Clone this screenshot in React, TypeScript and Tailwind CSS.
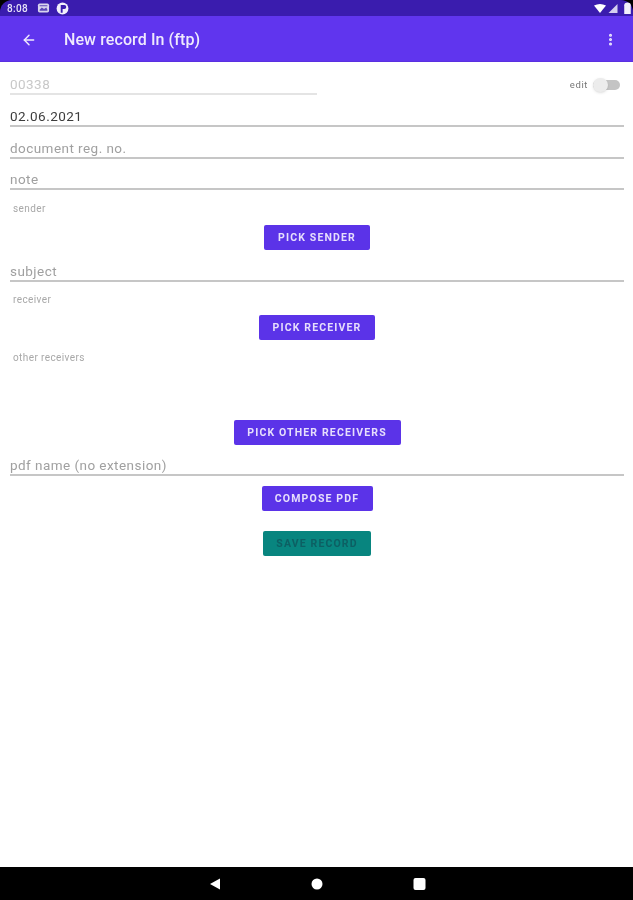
import React from 'react';
import { ArrowLeft, MoreVertical } from 'lucide-react';

const font = "font-['Roboto','Liberation_Sans',sans-serif]";

const Field: React.FC<{ text: string; dark?: boolean; faint?: boolean; className?: string }> = ({ text, dark, faint, className }) => (
  <div className={`flex items-end border-b-2 ${faint ? 'border-[#e4e4e4]' : 'border-[#c6c6c6]'} ${className ?? 'h-[32px]'}`}>
    <span className={`text-[13.5px] leading-[18px] tracking-[0.45px] blur-[0.35px] ${dark ? 'text-[#3c3c3c]' : faint ? 'text-[#c8c8c8]' : 'text-[#a0a0a0]'}`}>{text}</span>
  </div>
);

const Label: React.FC<{ text: string }> = ({ text }) => (
  <div className="h-[12px] pl-[3px] text-[10px] leading-[12px] tracking-[0.4px] text-[#a8a8a8] blur-[0.35px]">{text}</div>
);

const Btn: React.FC<{ text: string; className: string; teal?: boolean }> = ({ text, className, teal }) => (
  <div className="flex justify-center">
    <button
      className={`h-[25px] rounded-[2px] text-[10.5px] font-bold tracking-[1.15px] whitespace-nowrap blur-[0.35px] ${teal ? 'bg-[#08857f] text-[#0d5f63]' : 'bg-[#5b33e8] text-[#e6defc]'} ${className}`}
    >
      {text}
    </button>
  </div>
);

export default function App() {
  return (
    <div className={`h-[900px] flex flex-col bg-black overflow-hidden ${font}`}>
      <div className="h-[16px] shrink-0 rounded-tl-[12px] rounded-tr-[12px] bg-[#3a1cae] flex items-center justify-between pl-[7px] pr-[1px]">
        <div className="flex items-center">
          <span className="w-[30px] text-[10px] font-medium tracking-[0.3px] text-[#e8e4f8] blur-[0.3px]">8:08</span>
          <svg width="13" height="10" viewBox="0 0 11 9">
            <rect x="0.5" y="0.5" width="10" height="8" rx="1.5" fill="#d8d4ee" />
            <path d="M2 2h7v1H2zM2 6l2-2 2 1.500L8 4l1 2v1H2z" fill="#5b45b8" />
          </svg>
          <svg className="ml-[6px]" width="13" height="13" viewBox="0 0 11 11">
            <circle cx="5.500" cy="5.500" r="5" fill="#f2f0fb" />
            <path d="M4 2.500h3a1.600 1.600 0 0 1 0 3.400H5.600V9H4z" fill="#3a1cae" />
          </svg>
        </div>
        <div className="flex items-center gap-[2px]">
          <svg width="12" height="9" viewBox="0 0 12 9"><path d="M0 1.500Q6-1.500 12 1.500L6 9z" fill="#fff" /></svg>
          <svg width="10" height="9" viewBox="0 0 9 9"><path d="M9 0v9H0z" fill="#d4cff0" /></svg>
          <svg className="ml-[3px]" width="9" height="12" viewBox="0 0 8 11"><path d="M1 3q0-2.500 3-2.500T7 3v8H1z" fill="#f2f0fb" /></svg>
        </div>
      </div>

      <header className="h-[46px] shrink-0 bg-[#6035ee] flex items-center pt-[2px] pl-[21px] pr-[15px] border-b border-[#5a30e0]">
        <ArrowLeft size={16} strokeWidth={2.2} className="text-[#efeafd]" />
        <h1 className="ml-[27px] text-[16px] font-medium tracking-[0.1px] text-[#efeafd] blur-[0.3px]">New record In (ftp)</h1>
        <MoreVertical size={15} strokeWidth={2.8} className="ml-auto text-[#efeafd]" />
      </header>

      <main className="flex-1 bg-white pl-[10px] pr-[9px] pt-[1px]">
        <div className="flex items-end justify-between">
          <Field text="00338" faint className="h-[32px] w-[307px]" />
          <div className="flex items-center gap-[5px] pr-[4px] pb-[3px]">
            <span className="text-[9.5px] tracking-[0.6px] text-[#777] blur-[0.35px]">edit</span>
            <div className="relative w-[27px] h-[10px] rounded-full bg-[#c4c4c4]">
              <div className="absolute left-0 top-[-2px] w-[15px] h-[14px] rounded-full bg-[#ececec] shadow-sm" />
            </div>
          </div>
        </div>
        <Field text="02.06.2021" dark />
        <Field text="document reg. no." />
        <Field text="note" className="h-[31px]" />

        <div className="pt-[13px]"><Label text="sender" /></div>
        <div className="pt-[10px]"><Btn text="PICK SENDER" className="w-[106px]" /></div>
        <Field text="subject" />

        <div className="pt-[12px]"><Label text="receiver" /></div>
        <div className="pt-[9px]"><Btn text="PICK RECEIVER" className="w-[116px]" /></div>
        <div className="pt-[12px]"><Label text="other receivers" /></div>

        <div className="pt-[56px]"><Btn text="PICK OTHER RECEIVERS" className="w-[167px]" /></div>
        <Field text="pdf name (no extension)" className="h-[31px]" />

        <div className="pt-[10px]"><Btn text="COMPOSE PDF" className="w-[111px]" /></div>
        <div className="pt-[20px]"><Btn text="SAVE RECORD" teal className="w-[108px]" /></div>
      </main>

      <nav className="h-[33px] shrink-0 bg-black flex items-center">
        <div className="w-full flex items-center justify-center gap-[90px] pl-[1px]">
          <svg width="12" height="12" viewBox="0 0 12 12"><path d="M11 0.500v11L1 6z" fill="#fff" /></svg>
          <svg width="12" height="12" viewBox="0 0 12 12"><circle cx="6" cy="6" r="5.500" fill="#fff" /></svg>
          <svg width="13" height="12" viewBox="0 0 13 12"><rect x="0.500" width="12" height="12" rx="2" fill="#fff" /></svg>
        </div>
      </nav>
    </div>
  );
}
